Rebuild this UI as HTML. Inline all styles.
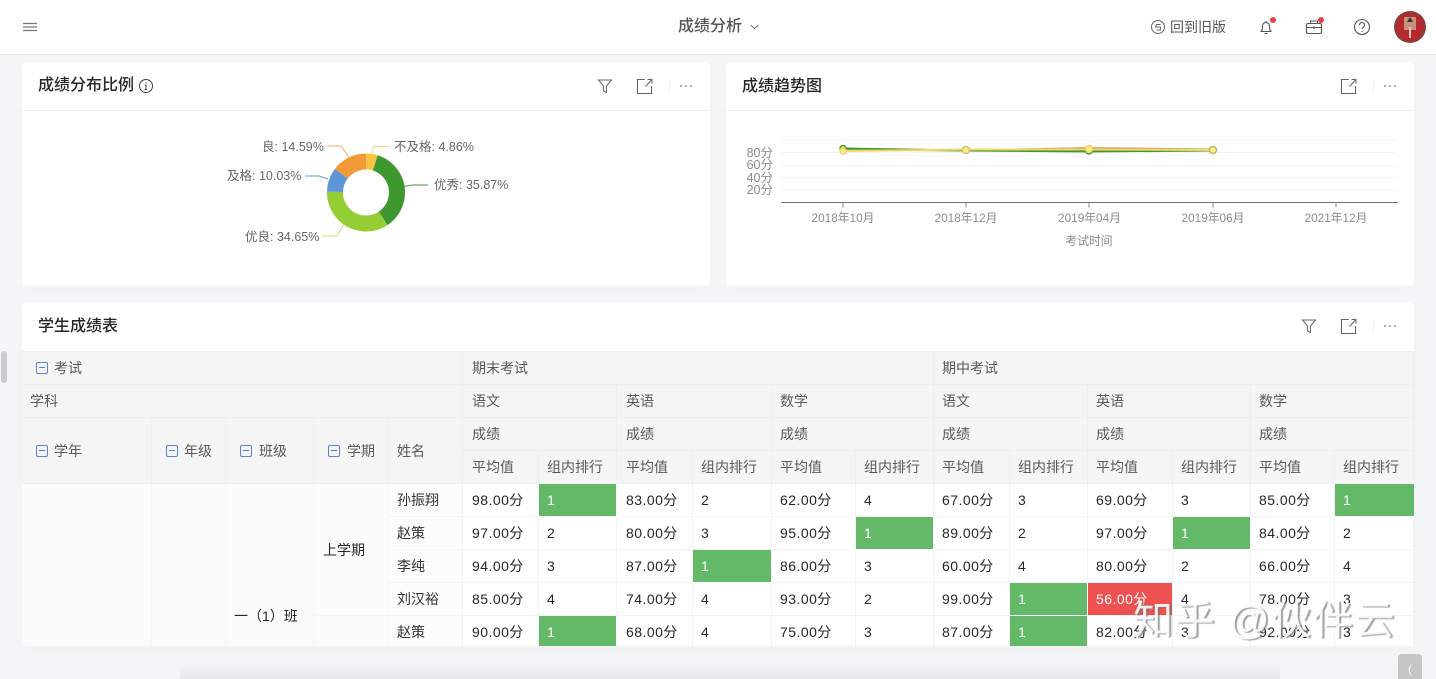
<!DOCTYPE html>
<html lang="zh"><head><meta charset="utf-8"><style>
*{box-sizing:border-box}
html,body{margin:0;padding:0;width:1436px;height:679px;overflow:hidden;background:#f3f5f6;font-family:"Liberation Sans","Noto Sans CJK SC",sans-serif;color:#333}
#root{position:relative;width:1436px;height:679px;overflow:hidden}
.a{position:absolute;white-space:nowrap}
.card{position:absolute;background:#fff;border-radius:4px;box-shadow:0 2px 10px rgba(0,0,0,.02)}
.title{position:absolute;font-size:16px;font-weight:500;color:#262626;line-height:24px;white-space:nowrap}
.hl{position:absolute;height:1px;background:#f0f0f0}
table{border-collapse:separate;border-spacing:0;table-layout:fixed;position:absolute;left:0;top:0;font-size:14px}
td{height:33px;padding:0 0 0 8px;border-right:1px solid #efefef;border-bottom:1px solid #efefef;white-space:nowrap;overflow:hidden;color:#262626}
.h td{background:#f5f5f5;color:#595959}
.b td{letter-spacing:.45px;background:#fff;border-color:#f3f3f3}
.b td.n{letter-spacing:0;color:#333;background:#fcfcfc}
.b td.s{background:#fbfbfb;border-color:#f5f5f5}
.b td.g{background:#63b968;color:#fff;border-right:1px solid #fff;border-bottom:1px solid #fff}
.b td.g:last-child{border-right:0}
.b td.r{background:#ed5151;color:#fff}
.v td:nth-last-child(12),.v td:nth-last-child(10){padding-left:9px}
.w td:nth-last-child(6),.w td:nth-last-child(5){padding-left:9px}
.m{position:absolute;width:12px;height:12px;border:1.3px solid #5c82c8;border-radius:2px}
.m:after{content:"";position:absolute;left:2px;right:2px;top:4px;height:1px;background:#5c82c8}
.t{position:absolute;white-space:nowrap;font-size:14px;color:#595959;line-height:20px}
svg{position:absolute;overflow:visible}
svg text{font-family:"Liberation Sans","Noto Sans CJK SC",sans-serif}
</style></head><body><div id="root">

<div class="a" style="left:180px;top:664px;width:1100px;height:15px;background:linear-gradient(to bottom,rgba(150,155,158,0),rgba(150,155,158,.14))"></div>
<div class="a" style="left:0;top:0;width:1436px;height:55px;background:#fff;border-bottom:1px solid #e6e8e9"></div>
<svg style="left:0;top:0" width="1436" height="55" fill="none" stroke="#777">
<path d="M23 23.500H37M23 27H37M23 30.500H37" stroke-width="1.300"/>
<path d="M750.500 25l4 3.500 4-3.500" stroke-width="1"/>
<circle cx="1158" cy="27" r="6.500" stroke="#666"/>
<path d="M1160.500 24.500h-4l-1 2.500h5v3h-4" stroke="#666" stroke-width=".9"/>
<path d="M1260.500 31.500c1.500-.5 2-2 2-4.500v-1a3.500 3.500 0 017 0v1c0 2.500.5 4 2 4.500zM1264.500 33.500h3M1266 21v1.500" stroke="#555" stroke-width="1.100"/>
<rect x="1306.500" y="23.500" width="15" height="10" rx="1.500" stroke="#555" stroke-width="1.100"/>
<path d="M1306.500 27.500h15M1310.500 23.500v-2.500h7v2.500M1314 26.500v2.500" stroke="#555" stroke-width="1.100"/>
<circle cx="1362" cy="27" r="7.500" stroke="#555" stroke-width="1.100"/>
<path d="M1359.500 25.200a2.500 2.500 0 114 1.800c-.9.600-1.400 1.100-1.400 2.100M1362 31v1" stroke="#555" stroke-width="1.100"/>
<circle cx="1273" cy="20" r="3" fill="#e8403f" stroke="none"/>
<circle cx="1321" cy="20" r="3" fill="#e8403f" stroke="none"/>
<circle cx="1410" cy="27" r="16" fill="#8f3b38" stroke="none"/>
<circle cx="1410" cy="27" r="13.500" fill="#b5282e" stroke="none"/>
<rect x="1404" y="17" width="12" height="13" fill="#c98f78" stroke="none"/>
<path d="M1410 17l3 5h-6z" fill="#333" stroke="none"/>
<path d="M1410 27v11" stroke="#e6c9b8" stroke-width="2"/>
</svg>
<div class="a" style="left:678px;top:16px;font-size:16px;font-weight:500;line-height:22px;color:#555">成绩分析</div>
<div class="a" style="left:1170px;top:17px;font-size:14px;line-height:20px;color:#595959">回到旧版</div>

<div class="card" style="left:22px;top:62px;width:688px;height:224px"></div>
<div class="hl" style="left:22px;top:110px;width:688px"></div>
<div class="title" style="left:38px;top:74px">成绩分布比例</div>

<svg style="left:0;top:0" width="720" height="290" fill="none">
<g stroke-width="16" transform="rotate(-90 366 192.500)">
<circle cx="366" cy="192.500" r="31" pathLength="100" stroke="#f8c543" stroke-dasharray="4.860 95.140" stroke-dashoffset="0"/>
<circle cx="366" cy="192.500" r="31" pathLength="100" stroke="#3f982f" stroke-dasharray="35.870 64.130" stroke-dashoffset="-4.860"/>
<circle cx="366" cy="192.500" r="31" pathLength="100" stroke="#95cd35" stroke-dasharray="34.650 65.350" stroke-dashoffset="-40.730"/>
<circle cx="366" cy="192.500" r="31" pathLength="100" stroke="#6096d8" stroke-dasharray="10.030 89.970" stroke-dashoffset="-75.380"/>
<circle cx="366" cy="192.500" r="31" pathLength="100" stroke="#f29a38" stroke-dasharray="14.590 85.410" stroke-dashoffset="-85.410"/>
</g>
<path d="M371 154l3-7.500h14" stroke="#f8d36a"/>
<path d="M404 186.500l8-1.500h16" stroke="#3f982f"/>
<path d="M344 224l-7 12h-15" stroke="#c5dc78"/>
<path d="M328 179l-9-3h-14" stroke="#6096d8"/>
<path d="M349 157l-8-11h-14" stroke="#f2a860"/>
<g font-size="12.500" fill="#666" stroke="none">
<text x="394" y="151">不及格: 4.86%</text>
<text x="434" y="189">优秀: 35.87%</text>
<text x="245" y="241">优良: 34.65%</text>
<text x="227" y="180">及格: 10.03%</text>
<text x="262" y="151">良: 14.59%</text>
</g>
</svg>

<div class="card" style="left:726px;top:62px;width:688px;height:224px"></div>
<div class="hl" style="left:726px;top:110px;width:688px"></div>
<div class="title" style="left:742px;top:75px">成绩趋势图</div>
<svg style="left:0;top:0" width="1436" height="290" fill="none">
<path d="M781 140.500H1398M781 152.500H1398M781 165.500H1398M781 177.500H1398M781 189.500H1398" stroke="#f4f4f4"/>
<path d="M781 202.500H1398" stroke="#6e6e6e"/>
<path d="M843 202.500v5M966 202.500v5M1089 202.500v5M1213 202.500v5M1336 202.500v5" stroke="#888"/>
<g font-size="12.500" fill="#8c8c8c" text-anchor="end">
<text x="773" y="157">80分</text><text x="773" y="169">60分</text><text x="773" y="182">40分</text><text x="773" y="194">20分</text>
</g>
<g font-size="11.800" fill="#8c8c8c" text-anchor="middle">
<text x="843" y="222">2018年10月</text><text x="966" y="222">2018年12月</text><text x="1089.500" y="222">2019年04月</text><text x="1213" y="222">2019年06月</text><text x="1336" y="222">2021年12月</text>
<text x="1089" y="245">考试时间</text>
</g>
<path d="M843 149.500L966 150.500 1089 148 1213 149.500" stroke="#c9a96a" stroke-width="2"/>
<path d="M843 148.500L966 150.500 1089 151.500 1213 150.500" stroke="#3f982f" stroke-width="2"/>
<path d="M843 151L966 149.500 1089 149.500 1213 150" stroke="#f2d768" stroke-width="2"/>
<g stroke-width="1.500" fill="#fdf07e">
<circle cx="843" cy="148.500" r="3" stroke="#3f982f"/><circle cx="843" cy="151" r="3" stroke="#f2d768"/>
<circle cx="966" cy="150" r="3.500" stroke="#c9c178"/>
<circle cx="1089" cy="151" r="3" stroke="#3f982f"/><circle cx="1089" cy="149" r="3.500" stroke="#e8cf78"/>
<circle cx="1213" cy="150" r="3.500" stroke="#b9b56e"/>
</g>
</svg>

<div class="card" style="left:22px;top:302px;width:1392px;height:344px"></div>
<div class="title" style="left:38px;top:315px">学生成绩表</div>

<svg style="left:0;top:0" width="1436" height="360" fill="none" stroke="#666">
<circle cx="146" cy="86" r="6.500" stroke="#444"/><path d="M146 85v4.500M146 82.500v1.200M144.600 89.500h2.800M144.800 85h1.200" stroke="#444"/>
<path d="M598.500 80h13l-5 6v6.500l-3-1.500v-5z" stroke-width="1"/>
<path d="M645 79.500h-7.500v14h14v-7.500M645.500 86.500l6-6.500M647.500 79.500h4.500v4" stroke-width="1"/>
<path d="M1349 79.500h-7.500v14h14v-7.500M1349.500 86.500l6-6.500M1351.500 79.500h4.500v4" stroke-width="1"/>
<path d="M1302.500 320h13l-5 6v6.500l-3-1.500v-5z" stroke-width="1"/>
<path d="M1349 319.500h-7.500v14h14v-7.500M1349.500 326.500l6-6.500M1351.500 319.500h4.500v4" stroke-width="1"/>
<path d="M669.500 79v14M1373.500 79v14M1373.500 319v14" stroke="#f3f3f3"/>
<g fill="#777" stroke="none">
<circle cx="681" cy="86" r=".9"/><circle cx="686" cy="86" r=".9"/><circle cx="691" cy="86" r=".9"/>
<circle cx="1385" cy="86" r=".9"/><circle cx="1390" cy="86" r=".9"/><circle cx="1395" cy="86" r=".9"/>
<circle cx="1385" cy="326" r=".9"/><circle cx="1390" cy="326" r=".9"/><circle cx="1395" cy="326" r=".9"/>
</g>
</svg>

<div class="a" style="left:22px;top:351px;width:1392px;height:295px;overflow:hidden;border-top:1px solid #efefef">
<table style="width:1392px">
<colgroup><col style="width:130px"><col style="width:74px"><col style="width:88px"><col style="width:75px"><col style="width:74px"><col style="width:76px"><col style="width:78px"><col style="width:76px"><col style="width:79px"><col style="width:84px"><col style="width:78px"><col style="width:76px"><col style="width:78px"><col style="width:85px"><col style="width:78px"><col style="width:84px"><col style="width:79px"></colgroup>
<tbody class="h">
<tr><td colspan="5"></td><td colspan="6" style="padding-left:9px">期末考试</td><td colspan="6">期中考试</td></tr>
<tr class="w"><td colspan="5">学科</td><td colspan="2">语文</td><td colspan="2">英语</td><td colspan="2">数学</td><td colspan="2">语文</td><td colspan="2">英语</td><td colspan="2">数学</td></tr>
<tr class="w"><td rowspan="2"></td><td rowspan="2"></td><td rowspan="2"></td><td rowspan="2"></td><td rowspan="2">姓名</td><td colspan="2">成绩</td><td colspan="2">成绩</td><td colspan="2">成绩</td><td colspan="2">成绩</td><td colspan="2">成绩</td><td colspan="2">成绩</td></tr>
<tr class="v"><td>平均值</td><td>组内排行</td><td>平均值</td><td>组内排行</td><td>平均值</td><td>组内排行</td><td>平均值</td><td>组内排行</td><td>平均值</td><td>组内排行</td><td>平均值</td><td>组内排行</td></tr>
</tbody>
<tbody class="b">
<tr class="v"><td rowspan="5" class="s"></td><td rowspan="5" class="s"></td><td rowspan="5" class="s"></td><td rowspan="4" class="s"></td><td class="n">孙振翔</td><td>98.00分</td><td class="g">1</td><td>83.00分</td><td>2</td><td>62.00分</td><td>4</td><td>67.00分</td><td>3</td><td>69.00分</td><td>3</td><td>85.00分</td><td class="g">1</td></tr>
<tr class="v"><td class="n">赵策</td><td>97.00分</td><td>2</td><td>80.00分</td><td>3</td><td>95.00分</td><td class="g">1</td><td>89.00分</td><td>2</td><td>97.00分</td><td class="g">1</td><td>84.00分</td><td>2</td></tr>
<tr class="v"><td class="n">李纯</td><td>94.00分</td><td>3</td><td>87.00分</td><td class="g">1</td><td>86.00分</td><td>3</td><td>60.00分</td><td>4</td><td>80.00分</td><td>2</td><td>66.00分</td><td>4</td></tr>
<tr class="v"><td class="n">刘汉裕</td><td>85.00分</td><td>4</td><td>74.00分</td><td>4</td><td>93.00分</td><td>2</td><td>99.00分</td><td class="g">1</td><td class="r">56.00分</td><td>4</td><td>78.00分</td><td>3</td></tr>
<tr class="v"><td class="s"></td><td class="n">赵策</td><td>90.00分</td><td class="g">1</td><td>68.00分</td><td>4</td><td>75.00分</td><td>3</td><td>87.00分</td><td class="g">1</td><td>82.00分</td><td>3</td><td>92.00分</td><td>3</td></tr>
</tbody>
</table>
</div>

<div class="m" style="left:36px;top:362px"></div><div class="t" style="left:54px;top:358px">考试</div>
<div class="m" style="left:36px;top:445px"></div><div class="t" style="left:54px;top:441px">学年</div>
<div class="m" style="left:166px;top:445px"></div><div class="t" style="left:184px;top:441px">年级</div>
<div class="m" style="left:240px;top:445px"></div><div class="t" style="left:259px;top:441px">班级</div>
<div class="m" style="left:328px;top:445px"></div><div class="t" style="left:347px;top:441px">学期</div>
<div class="t" style="left:323px;top:540px;color:#262626">上学期</div>
<div class="t" style="left:234px;top:606px;color:#262626">一（1）班</div>

<div class="a" style="left:1133px;top:596px;font-size:40px;line-height:50px;letter-spacing:1.600px;color:rgba(255,255,255,.9);text-shadow:2px 1px 1px rgba(120,120,120,.7)">知乎 @伙伴云</div>

<div class="a" style="left:1px;top:351px;width:6px;height:32px;border-radius:3px;background:#c9cccf"></div>
<div class="a" style="left:1398px;top:654px;width:24px;height:25px;border-radius:4px 4px 0 0;background:#c4c8c5;color:#fff;font-size:12px;line-height:30px;text-align:center">(</div>
</div></body></html>
